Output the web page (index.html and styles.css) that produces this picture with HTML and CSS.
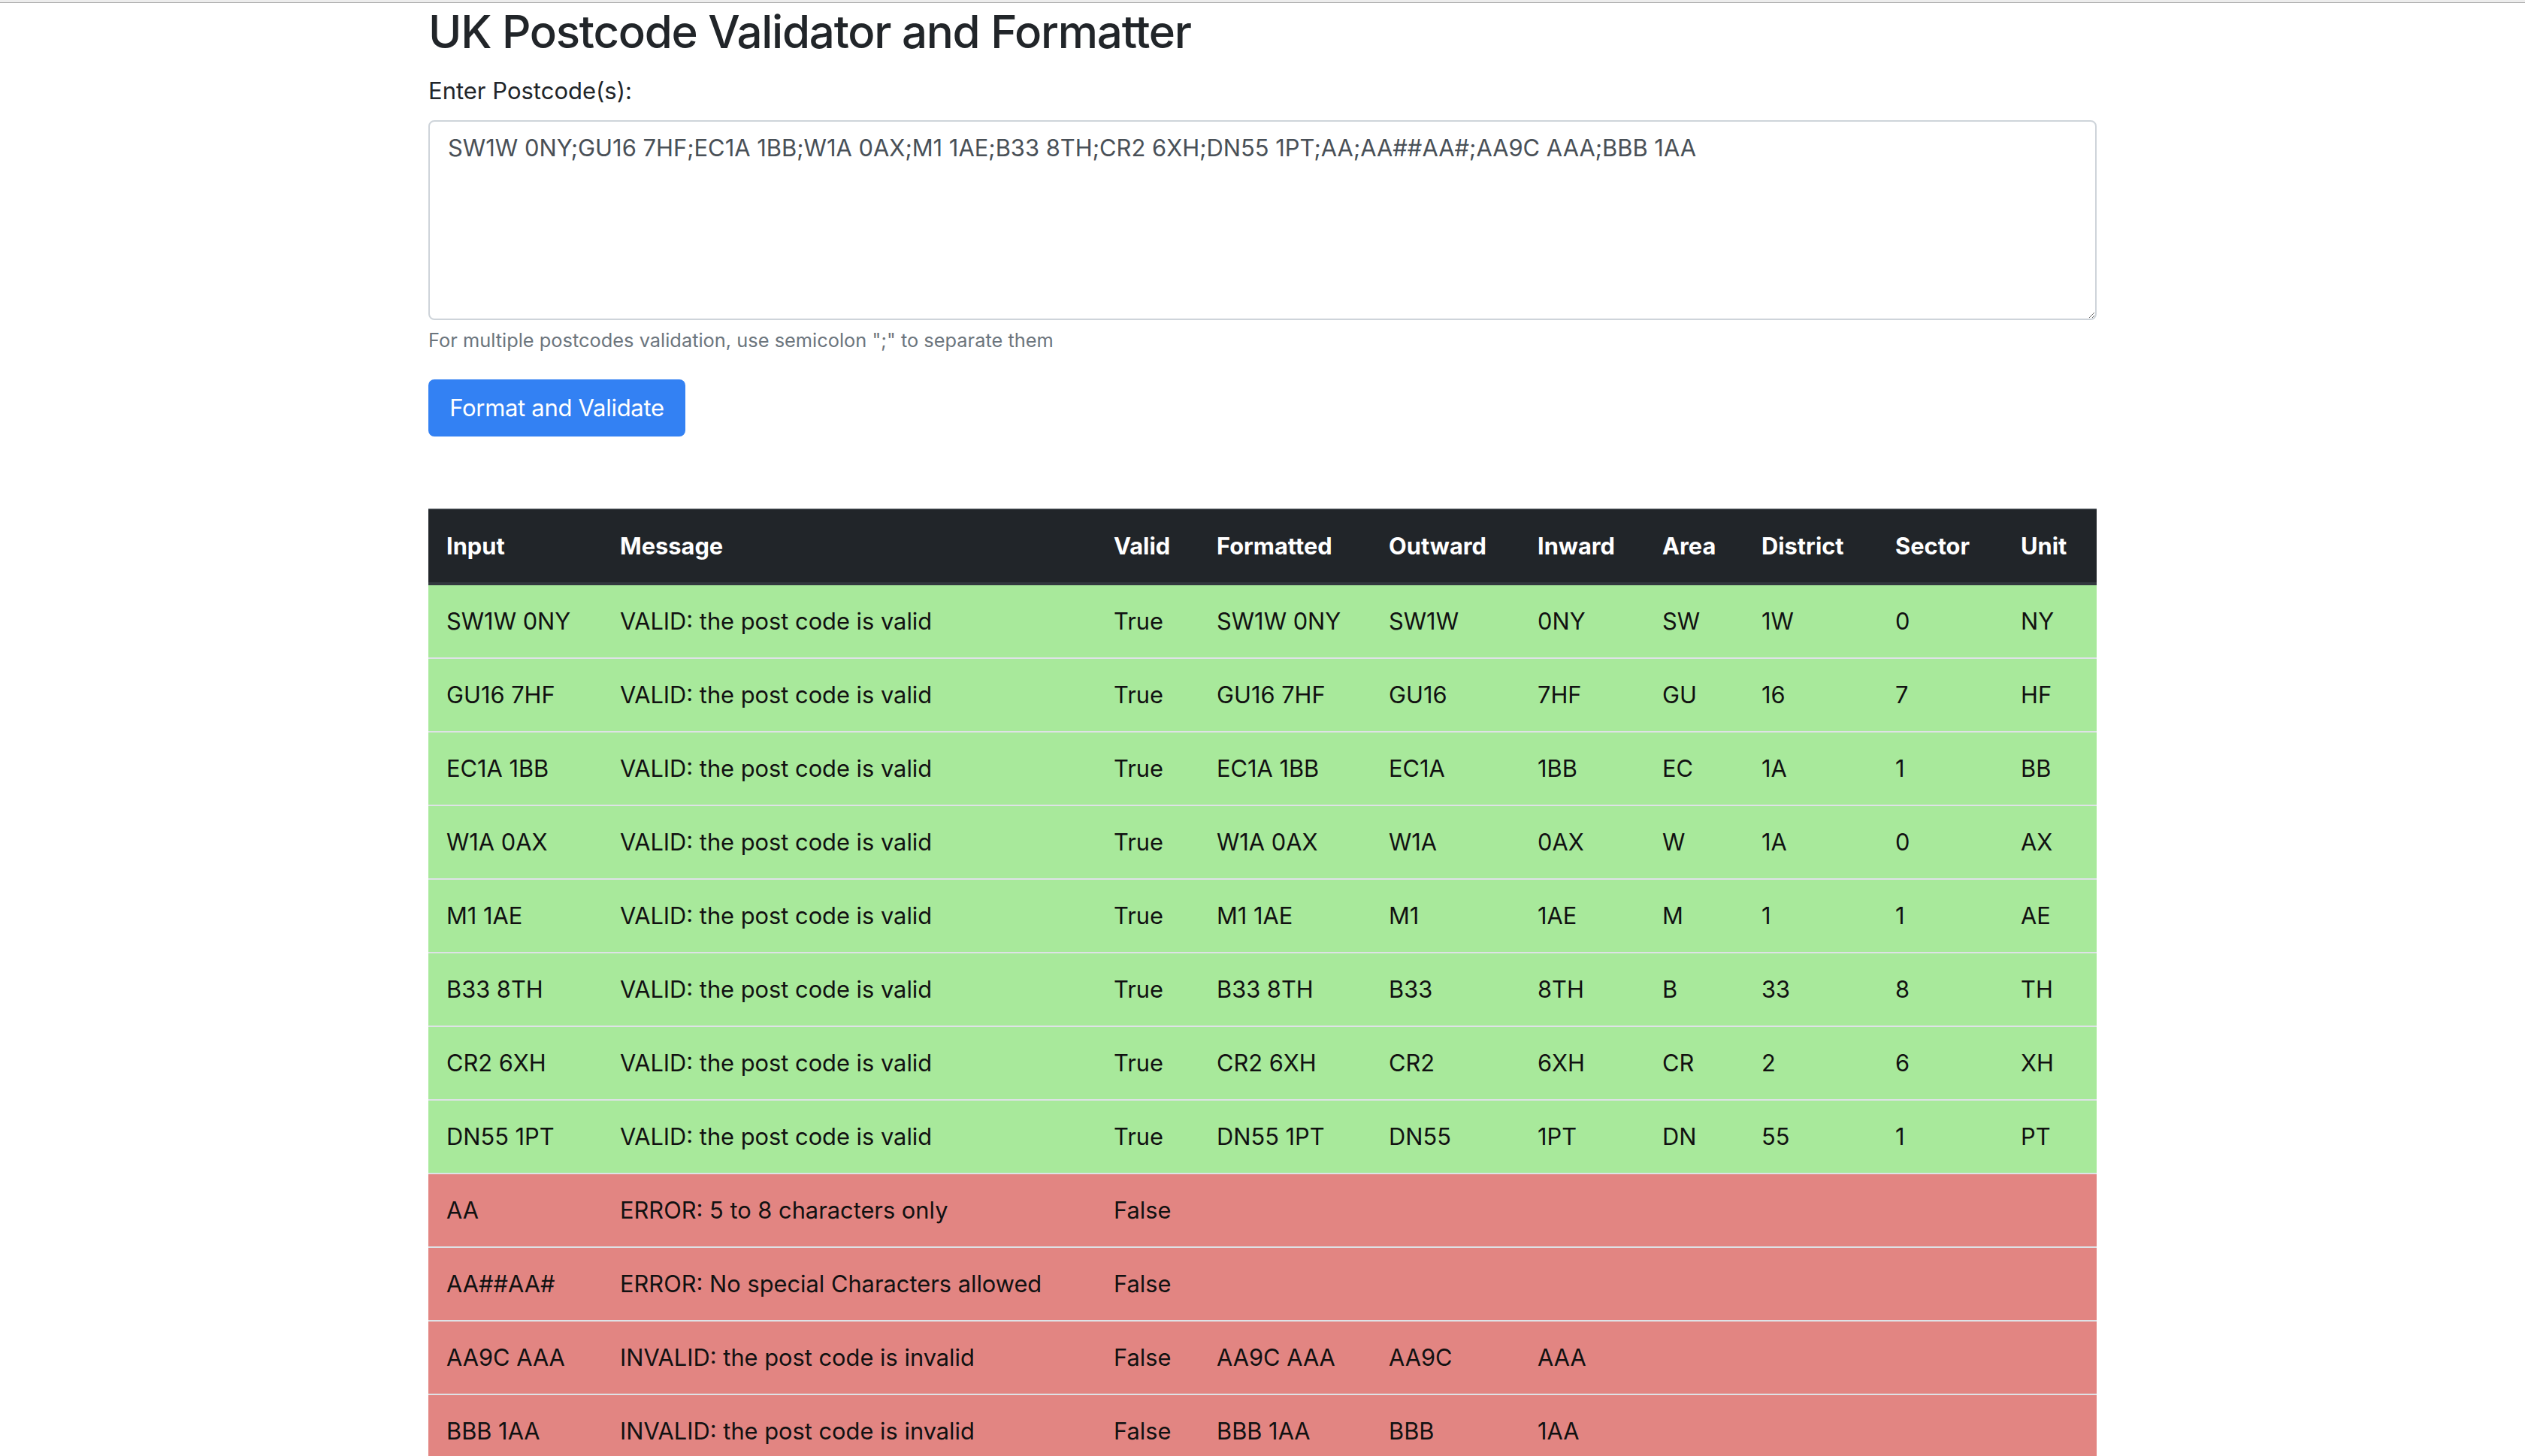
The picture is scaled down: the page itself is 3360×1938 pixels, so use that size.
FILE: index.html
```html
<!DOCTYPE html>
<html lang="en">
<head>
<meta charset="utf-8">
<title>UK Postcode Validator and Formatter</title>
<link rel="stylesheet" href="styles.css">
</head>
<body>
<div class="topline"></div>
<div class="container">
  <h2 class="title">UK Postcode Validator and Formatter</h2>
  <form class="form">
    <div class="form-group">
      <label class="label" for="postcodes">Enter Postcode(s):</label>
      <textarea id="postcodes" class="textarea">SW1W 0NY;GU16 7HF;EC1A 1BB;W1A 0AX;M1 1AE;B33 8TH;CR2 6XH;DN55 1PT;AA;AA##AA#;AA9C AAA;BBB 1AA</textarea>
      <small class="help">For multiple postcodes validation, use semicolon ";" to separate them</small>
    </div>
    <button type="button" class="btn">Format and Validate</button>
  </form>

  <table class="results">
    <colgroup>
      <col class="c-input"><col class="c-message"><col class="c-valid"><col class="c-formatted"><col class="c-outward"><col class="c-inward"><col class="c-area"><col class="c-district"><col class="c-sector"><col class="c-unit">
    </colgroup>
    <thead>
      <tr><th>Input</th><th>Message</th><th>Valid</th><th>Formatted</th><th>Outward</th><th>Inward</th><th>Area</th><th>District</th><th>Sector</th><th>Unit</th></tr>
    </thead>
    <tbody>
      <tr class="ok"><td>SW1W 0NY</td><td>VALID: the post code is valid</td><td>True</td><td>SW1W 0NY</td><td>SW1W</td><td>0NY</td><td>SW</td><td>1W</td><td>0</td><td>NY</td></tr>
      <tr class="ok"><td>GU16 7HF</td><td>VALID: the post code is valid</td><td>True</td><td>GU16 7HF</td><td>GU16</td><td>7HF</td><td>GU</td><td>16</td><td>7</td><td>HF</td></tr>
      <tr class="ok"><td>EC1A 1BB</td><td>VALID: the post code is valid</td><td>True</td><td>EC1A 1BB</td><td>EC1A</td><td>1BB</td><td>EC</td><td>1A</td><td>1</td><td>BB</td></tr>
      <tr class="ok"><td>W1A 0AX</td><td>VALID: the post code is valid</td><td>True</td><td>W1A 0AX</td><td>W1A</td><td>0AX</td><td>W</td><td>1A</td><td>0</td><td>AX</td></tr>
      <tr class="ok"><td>M1 1AE</td><td>VALID: the post code is valid</td><td>True</td><td>M1 1AE</td><td>M1</td><td>1AE</td><td>M</td><td>1</td><td>1</td><td>AE</td></tr>
      <tr class="ok"><td>B33 8TH</td><td>VALID: the post code is valid</td><td>True</td><td>B33 8TH</td><td>B33</td><td>8TH</td><td>B</td><td>33</td><td>8</td><td>TH</td></tr>
      <tr class="ok"><td>CR2 6XH</td><td>VALID: the post code is valid</td><td>True</td><td>CR2 6XH</td><td>CR2</td><td>6XH</td><td>CR</td><td>2</td><td>6</td><td>XH</td></tr>
      <tr class="ok"><td>DN55 1PT</td><td>VALID: the post code is valid</td><td>True</td><td>DN55 1PT</td><td>DN55</td><td>1PT</td><td>DN</td><td>55</td><td>1</td><td>PT</td></tr>
      <tr class="bad"><td>AA</td><td>ERROR: 5 to 8 characters only</td><td>False</td><td></td><td></td><td></td><td></td><td></td><td></td><td></td></tr>
      <tr class="bad"><td>AA##AA#</td><td>ERROR: No special Characters allowed</td><td>False</td><td></td><td></td><td></td><td></td><td></td><td></td><td></td></tr>
      <tr class="bad"><td>AA9C AAA</td><td>INVALID: the post code is invalid</td><td>False</td><td>AA9C AAA</td><td>AA9C</td><td>AAA</td><td></td><td></td><td></td><td></td></tr>
      <tr class="bad"><td>BBB 1AA</td><td>INVALID: the post code is invalid</td><td>False</td><td>BBB 1AA</td><td>BBB</td><td>1AA</td><td></td><td></td><td></td><td></td></tr>
    </tbody>
  </table>
</div>
</body>
</html>
```
FILE: styles.css
```css
html, body {
  margin: 0;
  padding: 0;
  background: #ffffff;
}

body {
  font-family: Inter, Roboto, "Liberation Sans", sans-serif;
  font-size: 32px;
  line-height: 1.5;
  color: #212529;
}

.topline {
  height: 3px;
  background: #ededed;
  border-bottom: 1px solid #ababab;
}

.container {
  width: 2220px;
  margin: 0 auto;
}

.title {
  margin: 0 0 16px 0;
  font-size: 60px;
  font-weight: 500;
  line-height: 76.8px;
  letter-spacing: -1.25px;
  color: #212529;
}

.form {
  margin: 0;
}

.form-group {
  margin-bottom: 32px;
}

.label {
  display: inline-block;
  margin-bottom: 16px;
  font-size: 31px;
}

.textarea {
  display: block;
  box-sizing: border-box;
  width: 100%;
  height: 266px;
  margin: 0;
  padding: 12px 24px;
  font-family: Inter, Roboto, "Liberation Sans", sans-serif;
  font-size: 30.9px;
  line-height: 1.5;
  color: #495057;
  background: #fff;
  border: 2px solid #ced4da;
  border-radius: 8px;
  resize: vertical;
  outline: none;
}

.help {
  display: block;
  margin-top: 8px;
  font-size: 25.4px;
  line-height: 38.4px;
  color: #6c757d;
}

.btn {
  display: block;
  box-sizing: border-box;
  width: 342px;
  height: 76px;
  padding: 12px 0;
  font-family: Inter, Roboto, "Liberation Sans", sans-serif;
  font-size: 31px;
  line-height: 48px;
  letter-spacing: -0.3px;
  white-space: nowrap;
  text-align: center;
  color: #fff;
  background: #3381f3;
  border: 2px solid #3381f3;
  border-radius: 8px;
}

.results {
  width: 100%;
  margin-top: 96px;
  border-collapse: collapse;
  table-layout: fixed;
  font-size: 30.8px;
}

.c-input { width: 231px; }
.c-message { width: 657px; }
.c-valid { width: 137px; }
.c-formatted { width: 229px; }
.c-outward { width: 198px; }
.c-inward { width: 166px; }
.c-area { width: 132px; }
.c-district { width: 178px; }
.c-sector { width: 167px; }
.c-unit { width: 125px; }

.results th,
.results td {
  padding: 24px;
  line-height: 48px;
  text-align: left;
  white-space: nowrap;
}

.results th {
  font-weight: 700;
  color: #fff;
  background: #212529;
  border-top: 2px solid #32383e;
  border-bottom: 4px solid #32383e;
  vertical-align: bottom;
}

.results td {
  border-top: 2px solid #dee2e6;
  vertical-align: top;
  color: #111;
}

.results tr.ok td {
  background: #a8e99b;
}

.results tr.bad td {
  background: #e28582;
}
```
